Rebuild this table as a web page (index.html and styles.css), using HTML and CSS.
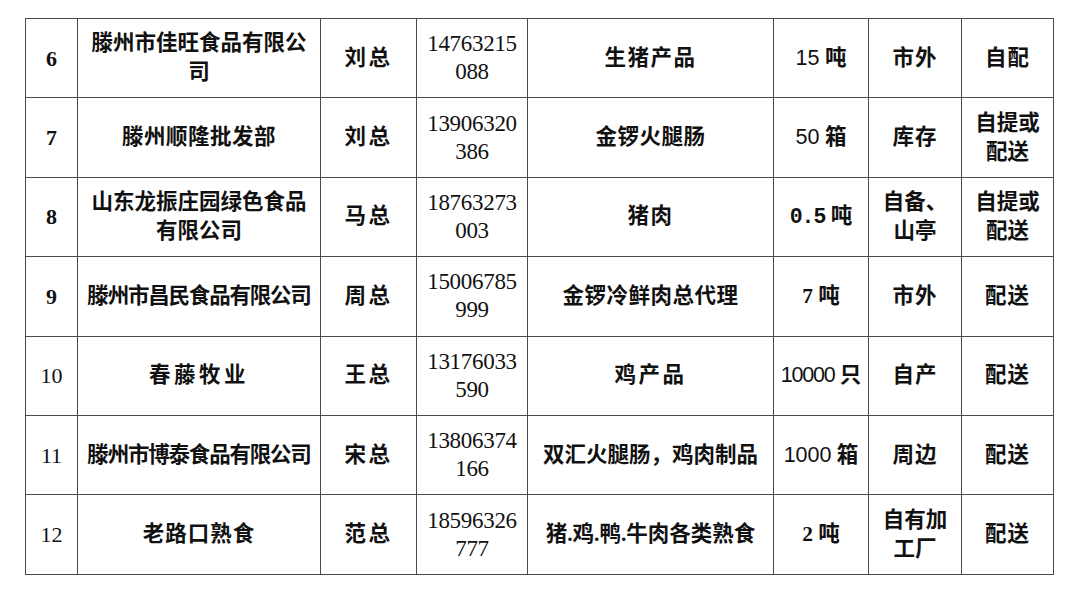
FILE: index.html
```html
<!DOCTYPE html>
<html lang="zh-CN">
<head>
<meta charset="utf-8">
<title>供应商列表</title>
<link rel="stylesheet" href="styles.css">
</head>
<body>
<table class="sheet">
  <colgroup>
    <col class="c-no"><col class="c-co"><col class="c-name"><col class="c-tel">
    <col class="c-prod"><col class="c-qty"><col class="c-loc"><col class="c-del">
  </colgroup>
  <tbody>
    <tr>
      <td class="no bold">6</td>
      <td class="s0">滕州市佳旺食品有限公<br>司</td>
      <td class="s2">刘总</td>
      <td class="tel">14763215<br>088</td>
      <td class="s15">生猪产品</td>
      <td class="qty"><span class="sans">15</span> 吨</td>
      <td class="s1">市外</td>
      <td class="s1">自配</td>
    </tr>
    <tr>
      <td class="no bold">7</td>
      <td class="s05">滕州顺隆批发部</td>
      <td class="s2">刘总</td>
      <td class="tel">13906320<br>386</td>
      <td class="s05">金锣火腿肠</td>
      <td class="qty"><span class="sans">50</span> 箱</td>
      <td class="s1">库存</td>
      <td class="s0">自提或<br>配送</td>
    </tr>
    <tr>
      <td class="no bold">8</td>
      <td class="s0">山东龙振庄园绿色食品<br>有限公司</td>
      <td class="s2">马总</td>
      <td class="tel">18763273<br>003</td>
      <td class="s15">猪肉</td>
      <td class="qty"><span class="mono">0.5</span> 吨</td>
      <td class="s0">自备、<br>山亭</td>
      <td class="s0">自提或<br>配送</td>
    </tr>
    <tr>
      <td class="no bold">9</td>
      <td class="tight">滕州市昌民食品有限公司</td>
      <td class="s2">周总</td>
      <td class="tel">15006785<br>999</td>
      <td class="s05">金锣冷鲜肉总代理</td>
      <td class="qty"><span class="bold">7</span> 吨</td>
      <td class="s1">市外</td>
      <td class="s1">配送</td>
    </tr>
    <tr>
      <td class="no">10</td>
      <td class="wide">春藤牧业</td>
      <td class="s2">王总</td>
      <td class="tel">13176033<br>590</td>
      <td class="s2">鸡产品</td>
      <td class="qty"><span class="narrow">10000</span> 只</td>
      <td class="s1">自产</td>
      <td class="s1">配送</td>
    </tr>
    <tr>
      <td class="no">11</td>
      <td class="tight">滕州市博泰食品有限公司</td>
      <td class="s2">宋总</td>
      <td class="tel">13806374<br>166</td>
      <td class="s0">双汇火腿肠，鸡肉制品</td>
      <td class="qty"><span class="sans">1000</span> 箱</td>
      <td class="s1">周边</td>
      <td class="s1">配送</td>
    </tr>
    <tr>
      <td class="no">12</td>
      <td class="s1">老路口熟食</td>
      <td class="s2">范总</td>
      <td class="tel">18596326<br>777</td>
      <td class="s0">猪.鸡.鸭.牛肉各类熟食</td>
      <td class="qty">2 吨</td>
      <td class="s0">自有加<br>工厂</td>
      <td class="s1">配送</td>
    </tr>
  </tbody>
</table>
</body>
</html>
```

FILE: styles.css
```css
html, body {
  margin: 0;
  padding: 0;
  background: #ffffff;
}

body {
  padding: 18px 0 0 25px;
  font-family: "Liberation Serif", "Noto Sans CJK SC", serif;
  color: #111111;
}

.sheet {
  border-collapse: collapse;
  table-layout: fixed;
  width: 1028px;
}

.c-no { width: 52px; }
.c-co { width: 243px; }
.c-name { width: 96px; }
.c-tel { width: 111px; }
.c-prod { width: 246px; }
.c-qty { width: 95px; }
.c-loc { width: 93px; }
.c-del { width: 92px; }

.sheet td {
  border: 1px solid #4a4a4a;
  height: 78.4px;
  padding: 0 1px;
  text-align: center;
  vertical-align: middle;
  font-size: 21.5px;
  line-height: 29px;
  font-weight: 700;
  white-space: nowrap;
}

.sheet td.s0 { letter-spacing: 0; }
.sheet td.s05 { letter-spacing: 0.5px; }
.sheet td.s1 { letter-spacing: 1px; }
.sheet td.s15 { letter-spacing: 1.5px; }
.sheet td.s2 { letter-spacing: 2.5px; }
.sheet td.wide { letter-spacing: 3.5px; }
.sheet td.tight { letter-spacing: -1.2px; }

.sheet td.no {
  font-size: 22px;
  font-weight: 400;
}

.sheet td.tel {
  font-size: 23px;
  line-height: 28px;
  font-weight: 400;
  letter-spacing: -0.3px;
}

.sheet td.no.bold { font-weight: 700; }
.bold { font-weight: 700; }

.sans {
  font-family: "Liberation Sans", sans-serif;
  font-weight: 400;
}

.narrow {
  font-family: "Liberation Sans", sans-serif;
  font-weight: 400;
  letter-spacing: -1.2px;
}

.mono {
  font-family: "Liberation Mono", monospace;
  font-weight: 700;
  letter-spacing: -1px;
}
```
